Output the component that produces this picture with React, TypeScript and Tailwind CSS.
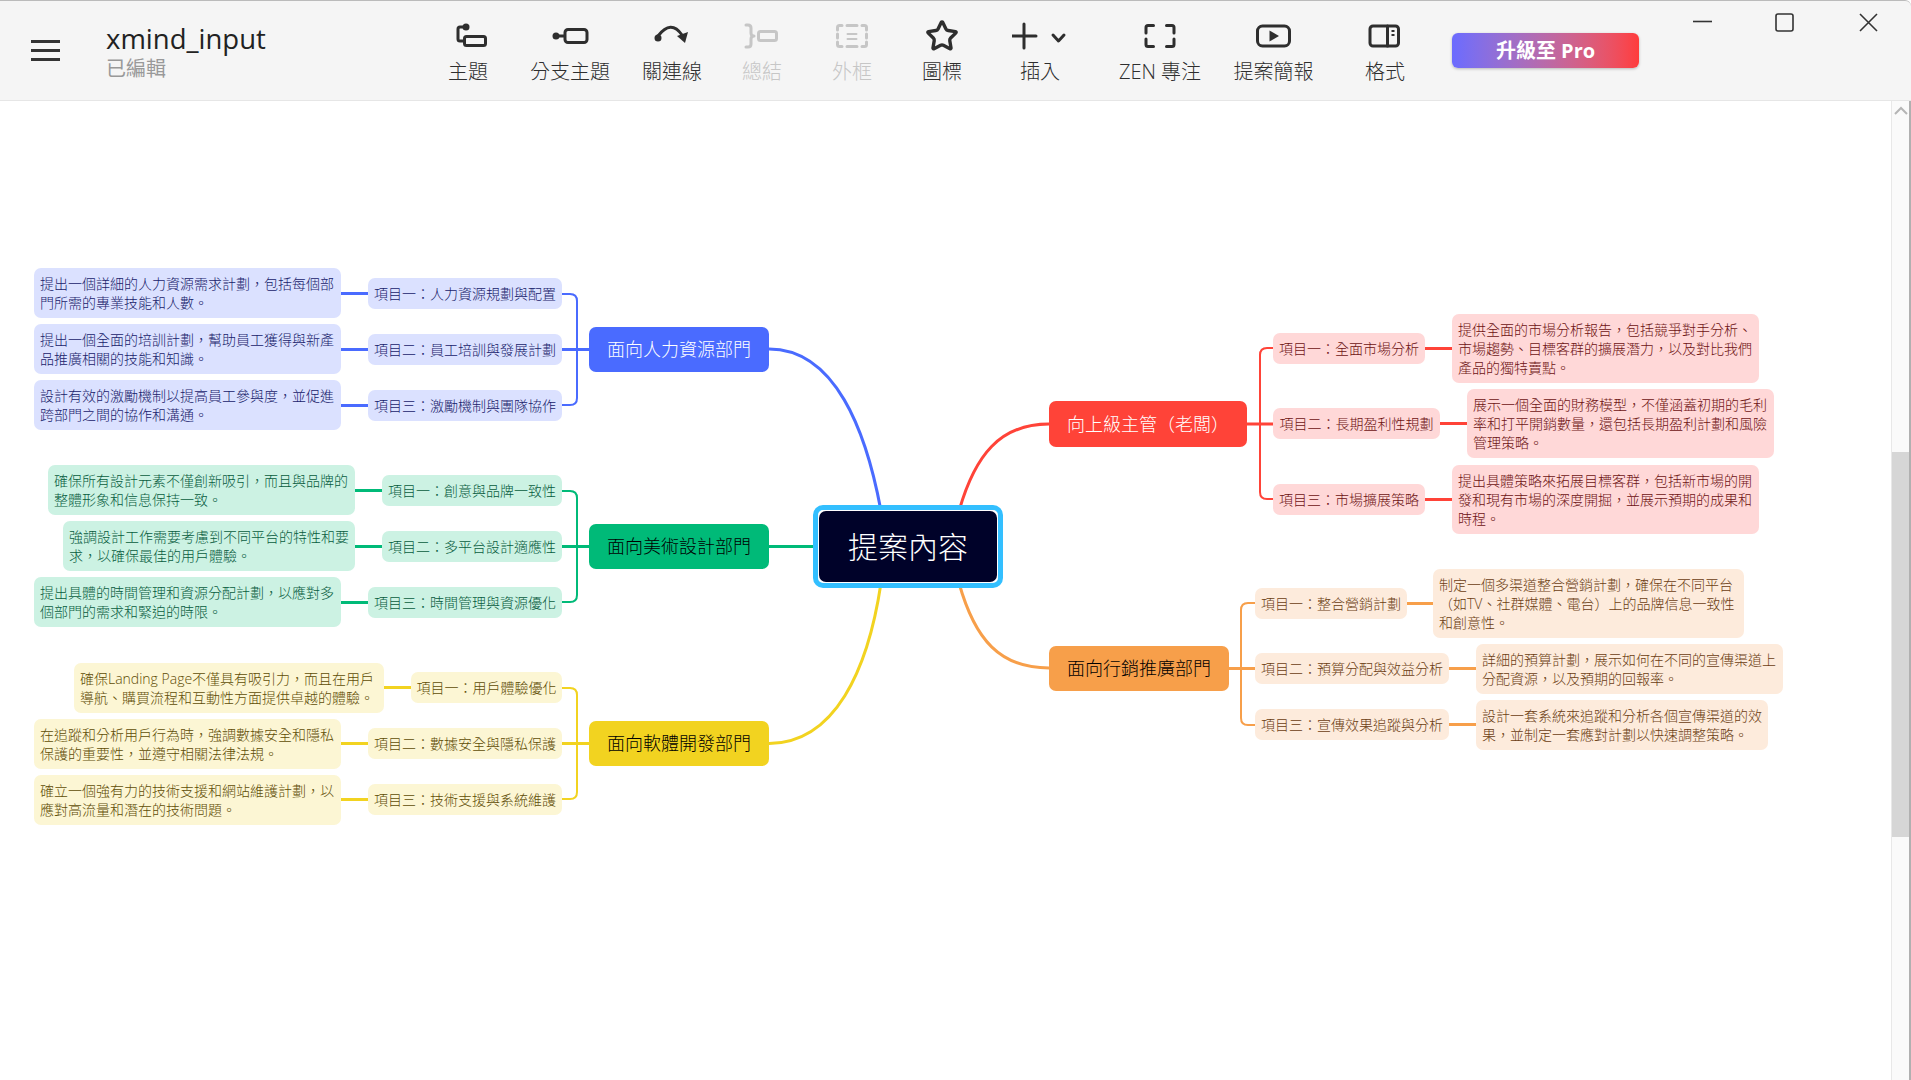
import { Star } from "lucide-react";

type Item = { sub: string; subBox: string; leaf: string[]; leafBox: string };
type Branch = { name: string; box: string; tone: string; subTone: string; items: Item[] };

const BRANCHES: Branch[] = [
  {
    name: "面向人力資源部門",
    box: "left-[589px] top-[327px] w-[180px] h-[45px]",
    tone: "bg-[#4a6bff] text-white",
    subTone: "bg-[#dbe1ff] text-[#18226b]",
    items: [
      {
        sub: "項目一：人力資源規劃與配置",
        subBox: "left-[368px] top-[278px] w-[194px] h-[31px]",
        leaf: ["提出一個詳細的人力資源需求計劃，包括每個部", "門所需的專業技能和人數。"],
        leafBox: "left-[34px] top-[268px] w-[307px] h-[50px]",
      },
      {
        sub: "項目二：員工培訓與發展計劃",
        subBox: "left-[368px] top-[334px] w-[194px] h-[31px]",
        leaf: ["提出一個全面的培訓計劃，幫助員工獲得與新產", "品推廣相關的技能和知識。"],
        leafBox: "left-[34px] top-[324px] w-[307px] h-[50px]",
      },
      {
        sub: "項目三：激勵機制與團隊協作",
        subBox: "left-[368px] top-[390px] w-[194px] h-[31px]",
        leaf: ["設計有效的激勵機制以提高員工參與度，並促進", "跨部門之間的協作和溝通。"],
        leafBox: "left-[34px] top-[380px] w-[307px] h-[50px]",
      },
    ],
  },
  {
    name: "面向美術設計部門",
    box: "left-[589px] top-[524px] w-[180px] h-[45px]",
    tone: "bg-[#00ba78] text-black",
    subTone: "bg-[#ccf2e3] text-[#075c3e]",
    items: [
      {
        sub: "項目一：創意與品牌一致性",
        subBox: "left-[382px] top-[475px] w-[180px] h-[31px]",
        leaf: ["確保所有設計元素不僅創新吸引，而且與品牌的", "整體形象和信息保持一致。"],
        leafBox: "left-[48px] top-[465px] w-[307px] h-[50px]",
      },
      {
        sub: "項目二：多平台設計適應性",
        subBox: "left-[382px] top-[531px] w-[180px] h-[31px]",
        leaf: ["強調設計工作需要考慮到不同平台的特性和要", "求，以確保最佳的用戶體驗。"],
        leafBox: "left-[63px] top-[521px] w-[292px] h-[50px]",
      },
      {
        sub: "項目三：時間管理與資源優化",
        subBox: "left-[368px] top-[587px] w-[194px] h-[31px]",
        leaf: ["提出具體的時間管理和資源分配計劃，以應對多", "個部門的需求和緊迫的時限。"],
        leafBox: "left-[34px] top-[577px] w-[307px] h-[50px]",
      },
    ],
  },
  {
    name: "面向軟體開發部門",
    box: "left-[589px] top-[721px] w-[180px] h-[45px]",
    tone: "bg-[#f2d320] text-black",
    subTone: "bg-[#fcf6d4] text-[#5f4d05]",
    items: [
      {
        sub: "項目一：用戶體驗優化",
        subBox: "left-[411px] top-[672px] w-[151px] h-[31px]",
        leaf: ["確保Landing Page不僅具有吸引力，而且在用戶", "導航、購買流程和互動性方面提供卓越的體驗。"],
        leafBox: "left-[74px] top-[663px] w-[310px] h-[50px]",
      },
      {
        sub: "項目二：數據安全與隱私保護",
        subBox: "left-[368px] top-[728px] w-[194px] h-[31px]",
        leaf: ["在追蹤和分析用戶行為時，強調數據安全和隱私", "保護的重要性，並遵守相關法律法規。"],
        leafBox: "left-[34px] top-[719px] w-[307px] h-[50px]",
      },
      {
        sub: "項目三：技術支援與系統維護",
        subBox: "left-[368px] top-[784px] w-[194px] h-[31px]",
        leaf: ["確立一個強有力的技術支援和網站維護計劃，以", "應對高流量和潛在的技術問題。"],
        leafBox: "left-[34px] top-[775px] w-[307px] h-[50px]",
      },
    ],
  },
  {
    name: "向上級主管（老闆）",
    box: "left-[1049px] top-[401px] w-[198px] h-[46px]",
    tone: "bg-[#ff4338] text-white",
    subTone: "bg-[#ffd8d8] text-[#6d1212]",
    items: [
      {
        sub: "項目一：全面市場分析",
        subBox: "left-[1273px] top-[333px] w-[152px] h-[31px]",
        leaf: ["提供全面的市場分析報告，包括競爭對手分析、", "市場趨勢、目標客群的擴展潛力，以及對比我們", "產品的獨特賣點。"],
        leafBox: "left-[1452px] top-[314px] w-[307px] h-[69px]",
      },
      {
        sub: "項目二：長期盈利性規劃",
        subBox: "left-[1273px] top-[408px] w-[167px] h-[31px]",
        leaf: ["展示一個全面的財務模型，不僅涵蓋初期的毛利", "率和打平開銷數量，還包括長期盈利計劃和風險", "管理策略。"],
        leafBox: "left-[1467px] top-[389px] w-[307px] h-[69px]",
      },
      {
        sub: "項目三：市場擴展策略",
        subBox: "left-[1273px] top-[484px] w-[152px] h-[31px]",
        leaf: ["提出具體策略來拓展目標客群，包括新市場的開", "發和現有市場的深度開掘，並展示預期的成果和", "時程。"],
        leafBox: "left-[1452px] top-[465px] w-[307px] h-[69px]",
      },
    ],
  },
  {
    name: "面向行銷推廣部門",
    box: "left-[1049px] top-[646px] w-[180px] h-[45px]",
    tone: "bg-[#f79f4a] text-black",
    subTone: "bg-[#fdebdc] text-[#6b3d12]",
    items: [
      {
        sub: "項目一：整合營銷計劃",
        subBox: "left-[1255px] top-[588px] w-[152px] h-[31px]",
        leaf: ["制定一個多渠道整合營銷計劃，確保在不同平台", "（如TV、社群媒體、電台）上的品牌信息一致性", "和創意性。"],
        leafBox: "left-[1433px] top-[569px] w-[311px] h-[69px]",
      },
      {
        sub: "項目二：預算分配與效益分析",
        subBox: "left-[1255px] top-[653px] w-[194px] h-[31px]",
        leaf: ["詳細的預算計劃，展示如何在不同的宣傳渠道上", "分配資源，以及預期的回報率。"],
        leafBox: "left-[1476px] top-[644px] w-[307px] h-[50px]",
      },
      {
        sub: "項目三：宣傳效果追蹤與分析",
        subBox: "left-[1255px] top-[709px] w-[194px] h-[31px]",
        leaf: ["設計一套系統來追蹤和分析各個宣傳渠道的效", "果，並制定一套應對計劃以快速調整策略。"],
        leafBox: "left-[1476px] top-[700px] w-[292px] h-[50px]",
      },
    ],
  },
];

const WIRES = [
  // trunk + stems, left side
  { color: "#4a6bff", w: 2, d: "M562 294 H570 Q577 294 577 301 V398 Q577 405 570 405 H562" },
  { color: "#4a6bff", w: 3, d: "M562 349.5 H589 M341 293.5 H368 M341 349.5 H368 M341 405.5 H368" },
  { color: "#00ba78", w: 2, d: "M562 491 H570 Q577 491 577 498 V595 Q577 602 570 602 H562" },
  { color: "#00ba78", w: 3, d: "M562 546.5 H589 M355 490.5 H382 M355 546.5 H382 M341 602.5 H368" },
  { color: "#f2d320", w: 2, d: "M562 688 H570 Q577 688 577 695 V792 Q577 799 570 799 H562" },
  { color: "#f2d320", w: 3, d: "M562 743.5 H589 M384 687.5 H411 M341 743.5 H368 M341 799.5 H368" },
  // right side
  { color: "#ff4338", w: 2, d: "M1273 348 H1267 Q1260 348 1260 355 V492 Q1260 499 1267 499 H1273" },
  { color: "#ff4338", w: 3, d: "M1247 424 H1273 M1425 348.5 H1452 M1440 423.5 H1467 M1425 499.5 H1452" },
  { color: "#f79f4a", w: 2, d: "M1255 603 H1248 Q1241 603 1241 610 V718 Q1241 725 1248 725 H1255" },
  { color: "#f79f4a", w: 3, d: "M1229 668.5 H1255 M1407 603.5 H1433 M1449 668.5 H1476 M1449 724.5 H1476" },
  // curves out of the central topic
  { color: "#4a6bff", w: 3, d: "M769 349 C835 349 866 430 881 511" },
  { color: "#00ba78", w: 3, d: "M769 546.5 H819" },
  { color: "#f2d320", w: 3, d: "M769 743.5 C835 743 868 670 881 583" },
  { color: "#ff4338", w: 3, d: "M1049 424 C1000 424 975 455 959 511" },
  { color: "#f79f4a", w: 3, d: "M1049 668 C1000 668 975 640 959 583" },
];

function IconBox({ children, w = 40 }: { children: React.ReactNode; w?: number }) {
  return (
    <svg width={w} height="40" viewBox={`0 0 ${w} 40`} fill="none" stroke="currentColor" strokeWidth="3" strokeLinecap="round" strokeLinejoin="round">
      {children}
    </svg>
  );
}

const TOOLS = [
  {
    label: "主題",
    width: "w-[102px]",
    icon: (
      <IconBox>
        <circle cx="18" cy="11" r="3.5" fill="currentColor" stroke="none" />
        <path d="M18 11 H12 Q10 11 10 13 V23 Q10 25 12 25 H16" />
        <rect x="16.5" y="20.5" width="21" height="9" rx="2" />
      </IconBox>
    ),
  },
  {
    label: "分支主題",
    width: "w-[102px]",
    icon: (
      <IconBox>
        <circle cx="6" cy="20" r="3.5" fill="currentColor" stroke="none" />
        <path d="M6 20 H14" />
        <rect x="15" y="13.5" width="22" height="13" rx="3" />
      </IconBox>
    ),
  },
  {
    label: "關連線",
    width: "w-[102px]",
    icon: (
      <IconBox>
        <circle cx="6" cy="22" r="3.5" fill="currentColor" stroke="none" />
        <path d="M6 20 Q19 3 30 19" />
        <path d="M25 20 L36 16 L33 27 Z" fill="currentColor" stroke="none" />
      </IconBox>
    ),
  },
  {
    label: "總結",
    width: "w-[78px]",
    disabled: true,
    icon: (
      <IconBox>
        <path d="M4 9 H6 Q9 9 9 12 V17 Q9 20 12 20 Q9 20 9 23 V28 Q9 31 6 31 H4" />
        <rect x="16.5" y="15.5" width="18" height="9" rx="2" />
      </IconBox>
    ),
  },
  {
    label: "外框",
    width: "w-[102px]",
    disabled: true,
    icon: (
      <IconBox>
        <path d="M10 9.5 H7.5 Q5.5 9.5 5.5 11.5 V14 M15 9.5 H25 M30 9.5 H32.5 Q34.5 9.5 34.5 11.5 V14 M5.5 18 V22 M34.5 18 V22 M5.5 26 V28.5 Q5.5 30.5 7.5 30.5 H10 M15 30.5 H25 M30 30.5 H32.5 Q34.5 30.5 34.5 28.5 V26" />
        <path d="M15.5 18 H24.5 M15.5 23 H24.5" strokeWidth="2" />
      </IconBox>
    ),
  },
  {
    label: "圖標",
    width: "w-[78px]",
    icon: <Star size={34} strokeWidth={2.4} className="my-[3px]" />,
  },
  {
    label: "插入",
    width: "w-[118px]",
    icon: (
      <IconBox w={56}>
        <path d="M0 20 H24 M12 8 V32" />
        <path d="M41 19 L46.5 25 L52 19" />
      </IconBox>
    ),
  },
  {
    label: "ZEN 專注",
    width: "w-[122px]",
    icon: (
      <IconBox>
        <path d="M13.5 9.5 H8 Q6 9.5 6 11.5 V17 M26.5 9.5 H32 Q34 9.5 34 11.5 V17 M6 23 V28.5 Q6 30.5 8 30.5 H13.5 M34 23 V28.5 Q34 30.5 32 30.5 H26.5" />
      </IconBox>
    ),
  },
  {
    label: "提案簡報",
    width: "w-[105px]",
    icon: (
      <IconBox>
        <rect x="3.5" y="10" width="32" height="20" rx="5" />
        <path d="M15.5 14.5 L25 20 L15.5 25.5 Z" fill="currentColor" stroke="none" />
      </IconBox>
    ),
  },
  {
    label: "格式",
    width: "w-[118px]",
    icon: (
      <IconBox>
        <rect x="5" y="10" width="28.5" height="20" rx="3" />
        <path d="M22.5 10 V30" />
        <path d="M26.5 15 H29.5 M26.5 19 H29.5" strokeWidth="2" strokeLinecap="butt" />
      </IconBox>
    ),
  },
];

function Toolbar() {
  return (
    <header className="flex h-[101px] shrink-0 items-center rounded-tr-[6px] border-t border-b border-t-[#bbbbbb] border-b-[#e6e6e6] bg-[#f5f5f5]">
      <div className="flex w-[417px] shrink-0 items-center pl-[31px]">
        <div className="flex w-[29px] flex-col gap-[6px]">
          <span className="h-[3px] bg-[#333333]" />
          <span className="h-[3px] bg-[#333333]" />
          <span className="h-[3px] bg-[#333333]" />
        </div>
        <div className="ml-[46px] mt-[3px] flex flex-col">
          <span className="text-[27.5px] leading-[34px] text-[#222222]">xmind_input</span>
          <span className="text-[20px] leading-[26px] text-[#999999]">已編輯</span>
        </div>
      </div>
      {TOOLS.map((t) => (
        <div key={t.label} className={`flex shrink-0 flex-col items-center ${t.width} ${t.disabled ? "text-[#c6c6c6]" : "text-[#2e2e2e]"}`}>
          {t.icon}
          <span className="mt-[3px] whitespace-nowrap text-[20px] font-light leading-[26px]">{t.label}</span>
        </div>
      ))}
      <button className="ml-[8px] h-[35px] w-[187px] shrink-0 rounded-[6px] bg-gradient-to-r from-[#6b6bff] to-[#ff3b3b] text-[20px] font-bold leading-[35px] text-white shadow-[0_1px_3px_rgba(0,0,0,0.25)]">
        升級至 Pro
      </button>
      <div className="flex self-start pt-[12px] text-[#333333]">
        <svg className="ml-[54px]" width="19" height="19" viewBox="0 0 19 19" stroke="currentColor" strokeWidth="1.6">
          <path d="M0 8.5 H19" />
        </svg>
        <svg className="ml-[63px]" width="19" height="19" viewBox="0 0 19 19" fill="none" stroke="currentColor" strokeWidth="1.6">
          <rect x="1" y="1" width="17" height="17" rx="2" />
        </svg>
        <svg className="ml-[65px]" width="19" height="19" viewBox="0 0 19 19" stroke="currentColor" strokeWidth="1.6">
          <path d="M1 1 L18 18 M18 1 L1 18" />
        </svg>
      </div>
    </header>
  );
}

function MindMap() {
  return (
    <div className="absolute left-0 top-[-101px] h-[1080px] w-[1911px]">
      <svg className="absolute left-0 top-0" width="1911" height="1080" fill="none" strokeLinecap="round">
        {WIRES.map((w) => (
          <path key={w.d} d={w.d} stroke={w.color} strokeWidth={w.w} />
        ))}
      </svg>

      {/* central topic */}
      <div className="absolute left-[813px] top-[505px] h-[83px] w-[190px] rounded-[10px] border-[5px] border-[#33bfff] bg-white p-[1px]">
        <div className="flex h-full w-full items-center justify-center rounded-[7px] bg-[#000229] text-[30px] font-light text-white">提案內容</div>
      </div>

      {BRANCHES.map((b) => (
        <div key={b.name}>
          <div className={`absolute flex items-center justify-center rounded-[7px] text-[18px] font-light ${b.box} ${b.tone}`}>{b.name}</div>
          {b.items.map((it) => (
            <div key={it.sub}>
              <div className={`absolute flex items-center justify-center whitespace-nowrap rounded-[7px] text-[14px] font-light ${it.subBox} ${b.subTone}`}>{it.sub}</div>
              <div className={`absolute flex flex-col justify-center whitespace-nowrap rounded-[7px] px-[6px] text-[14px] font-light leading-[19px] ${it.leafBox} ${b.subTone}`}>
                {it.leaf.map((line) => (
                  <span key={line}>{line}</span>
                ))}
              </div>
            </div>
          ))}
        </div>
      ))}
    </div>
  );
}

export default function App() {
  return (
    <div className="flex h-[1080px] w-[1911px] flex-col overflow-hidden bg-white font-['Open_Sans','Noto_Sans_CJK_TC',sans-serif]">
      <Toolbar />
      <div className="flex min-h-0 flex-1">
        <main className="relative flex-1">
          <MindMap />
        </main>
        <aside className="flex w-[18px] shrink-0 flex-col items-center border-l border-[#e8e8e8] bg-[#fafafa]">
          <svg className="mt-[5px]" width="14" height="10" viewBox="0 0 14 10" fill="none" stroke="#b5b5b5" strokeWidth="2">
            <path d="M1 8 L7 2 L13 8" />
          </svg>
          <div className="mt-[336px] h-[385px] w-full bg-[#d6d6d6]" />
        </aside>
        <div className="w-[2px] shrink-0 bg-[#b0b0b0]" />
      </div>
    </div>
  );
}
